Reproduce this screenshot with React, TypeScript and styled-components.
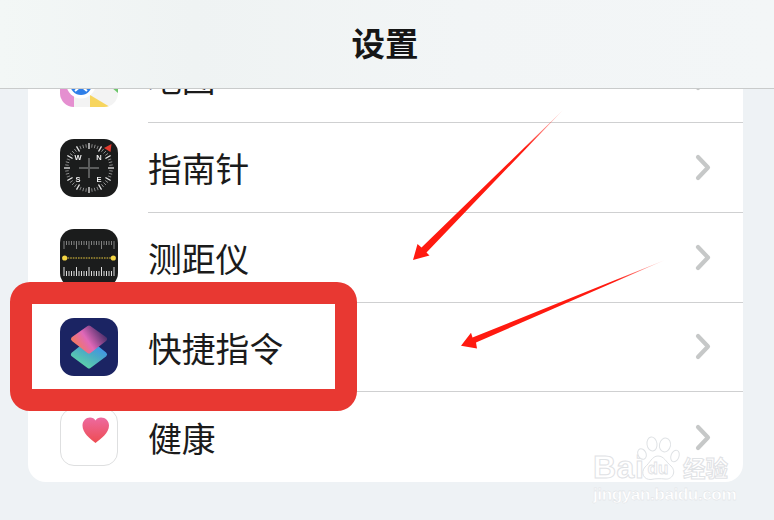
import styled, { createGlobalStyle } from "styled-components";

const GlobalStyle = createGlobalStyle`
    html, body {
        margin: 0;
        padding: 0;
        background: #eef2f5;
    }
`;

const Screen = styled.div`
    position: relative;
    width: 774px;
    height: 520px;
    overflow: hidden;
    background: #eef2f5;
    font-family: "Liberation Sans", "Noto Sans CJK SC", sans-serif;
`;

const NavBar = styled.header`
    position: relative;
    z-index: 2;
    height: 88px;
    display: flex;
    align-items: center;
    justify-content: center;
    background: linear-gradient(90deg, #f3f7f6 0%, #eff3f3 25%, #f2f5f6 60%, #f3f6f7 100%);
    border-bottom: 1px solid #c9cbcb;
`;

const Title = styled.h1`
    margin: 0;
    padding: 0 4px 4px 0;
    font-family: "Noto Sans CJK SC", sans-serif;
    font-size: 33.5px;
    font-weight: 700;
    line-height: 1;
    color: #161616;
`;

const Card = styled.section`
    margin: -55.5px 31px 0 28px;
    background: #fff;
    border-radius: 0 0 18px 18px;
`;

const Row = styled.div`
    height: 89.7px;
    display: flex;
    align-items: center;
    padding-left: 32px;
`;

const IconBox = styled.div<{ $outlined?: boolean }>`
    flex: none;
    width: 58px;
    height: 58px;
    border-radius: 14px;
    overflow: hidden;
    box-sizing: border-box;
    border: ${p => (p.$outlined ? "1px solid #dedfe0" : "none")};
    background: #fff;

    svg {
        display: block;
        filter: blur(0.35px);
    }
`;

const RowBody = styled.div<{ $last?: boolean }>`
    flex: 1;
    height: 100%;
    box-sizing: border-box;
    margin-left: 30px;
    padding-right: 32px;
    display: flex;
    align-items: center;
    justify-content: space-between;
    border-bottom: ${p => (p.$last ? "none" : "1px solid #cfd0d1")};
`;

const Label = styled.span`
    font-family: "Noto Sans CJK SC", sans-serif;
    font-size: 33.8px;
    line-height: 1;
    color: #1b1b1b;
    padding-top: 1px;
`;

const Highlight = styled.div`
    position: absolute;
    z-index: 3;
    left: 10px;
    top: 282px;
    width: 347px;
    height: 129px;
    box-sizing: border-box;
    border: 22px solid #e83832;
    border-radius: 20px;
`;

const Arrows = styled.svg`
    position: absolute;
    z-index: 3;
    left: 0;
    top: 0;
`;

const Watermark = styled.div`
    position: absolute;
    z-index: 4;
    left: 593px;
    top: 436px;
    width: 140px;
    display: flex;
    flex-direction: column;
    color: #fff;
    -webkit-text-stroke: 1px #dfe2e5;
`;

const MarkTop = styled.div`
    display: flex;
    align-items: flex-end;
    height: 45px;
`;

const MarkBai = styled.span`
    font-size: 32px;
    font-weight: 700;
    line-height: 28px;
    width: 45px;
    letter-spacing: 0.5px;
`;

const MarkPaw = styled.svg`
    flex: none;
    margin: 0 1px 0 -1px;
`;

const MarkCn = styled.span`
    font-family: "Noto Sans CJK SC", sans-serif;
    font-size: 22.5px;
    font-weight: 700;
    line-height: 28px;
`;

const MarkUrl = styled.span`
    font-size: 17.2px;
    font-weight: 700;
    line-height: 20px;
    margin-top: 3px;
    letter-spacing: -0.45px;
    white-space: nowrap;
    -webkit-text-stroke: 0.3px #d9dcdf;
`;

const Chevron = () => (
    <svg width="18" height="27" viewBox="0 0 18 27" fill="none">
        <path d="M5 3 L15 13.5 L5 24" stroke="#c6c8c8" strokeWidth="4.2" strokeLinecap="round" strokeLinejoin="round" />
    </svg>
);

const MapsIcon = () => (
    <svg width="58" height="58" viewBox="0 0 58 58">
        <rect width="58" height="58" fill="#f3f3f3" />
        <path d="M0 20 H14 V58 H0 Z" fill="#e58fd0" />
        <path d="M30 46 L50 58 H30 Z" fill="#f7d55e" />
        <path d="M51 38 H58 V44 Z" fill="#6dc66b" />
        <circle cx="21" cy="35" r="14.5" fill="#fff" />
        <circle cx="21" cy="35" r="11" fill="#2f7fe8" />
        <path d="M15 42 L21 37 L27 42" stroke="#fff" strokeWidth="2" fill="none" />
    </svg>
);

const compassTicks = Array.from({ length: 48 }, (_, i) => (i * 360) / 48);

const CompassIcon = () => (
    <svg width="58" height="58" viewBox="0 0 58 58">
        <rect width="58" height="58" fill="#1b1c1c" />
        {compassTicks.map((deg, i) => (
            <line
                key={deg}
                x1="29"
                y1={i % 4 === 0 ? 4 : 5}
                x2="29"
                y2={i % 4 === 0 ? 10 : 8.5}
                stroke={i % 4 === 0 ? "#e8e8e8" : "#8f8f8f"}
                strokeWidth={i % 4 === 0 ? 1.3 : 0.9}
                transform={`rotate(${deg} 29 29)`}
            />
        ))}
        <path d="M44 9 L51.5 5 L50.5 13 Z" fill="#e23a2e" />
        <path d="M29 19 V39 M19 29 H39" stroke="#5b5c5c" strokeWidth="2" />
        <g fill="#eee" fontFamily="Liberation Sans" fontSize="7.5" fontWeight="700" textAnchor="middle">
            <text x="18" y="21">W</text>
            <text x="39" y="21">N</text>
            <text x="18" y="43">S</text>
            <text x="39" y="43">E</text>
        </g>
    </svg>
);

const rulerTicks = Array.from({ length: 21 }, (_, i) => 4 + i * 2.5);

const RulerIcon = () => (
    <svg width="58" height="58" viewBox="0 0 58 58">
        <rect width="58" height="58" fill="#1b1c1c" />
        {rulerTicks.map((x, i) => (
            <line key={x} x1={x} y1="12" x2={x} y2={i % 5 === 0 ? 20 : 16} stroke="#8d8d8d" strokeWidth="0.9" />
        ))}
        {rulerTicks.map((x, i) => (
            <line key={x} x1={x} y1={i % 5 === 0 ? 38 : 42} x2={x} y2="47" stroke="#dcdcdc" strokeWidth="1" />
        ))}
        <line x1="5" y1="29" x2="53" y2="29" stroke="#e9c93e" strokeWidth="1.1" strokeDasharray="1.6 1" />
        <circle cx="4.7" cy="29" r="2.6" fill="#f4d544" />
        <circle cx="53.3" cy="29" r="2.6" fill="#f4d544" />
    </svg>
);

const ShortcutsIcon = () => (
    <svg width="58" height="58" viewBox="0 0 58 58">
        <defs>
            <linearGradient id="scBottom" x1="0.15" y1="1" x2="0.85" y2="0">
                <stop offset="0" stopColor="#5fd6a4" />
                <stop offset="0.55" stopColor="#4aa8c8" />
                <stop offset="1" stopColor="#3a8cf5" />
            </linearGradient>
            <linearGradient id="scTop" x1="0" y1="0.75" x2="1" y2="0.25">
                <stop offset="0" stopColor="#f47a58" />
                <stop offset="0.45" stopColor="#e068b8" />
                <stop offset="1" stopColor="#4a2e6a" />
            </linearGradient>
        </defs>
        <rect width="58" height="58" fill="#1b2463" />
        <path d="M29 24 L44.5 36.5 L29 48 L13.5 36.5 Z" fill="url(#scBottom)" stroke="url(#scBottom)" strokeWidth="5" strokeLinejoin="round" />
        <path d="M29 10 L44.5 21 L29 33 L13.5 21 Z" fill="url(#scTop)" stroke="url(#scTop)" strokeWidth="5" strokeLinejoin="round" />
    </svg>
);

const HealthIcon = () => (
    <svg width="56" height="56" viewBox="0 0 56 56">
        <defs>
            <linearGradient id="heart" x1="0" y1="0" x2="0" y2="1">
                <stop offset="0" stopColor="#ed6aa0" />
                <stop offset="1" stopColor="#ee4c52" />
            </linearGradient>
        </defs>
        <path
            d="M34.5 34 C29 29.5 21.5 24 21.5 16.5 C21.5 12 25 8.5 29 8.5 C31.5 8.5 33.5 9.8 34.5 11.5 C35.5 9.8 37.5 8.5 40 8.5 C44.5 8.5 48 12 48 16.5 C48 24 40 29.5 34.5 34 Z"
            fill="url(#heart)"
        />
    </svg>
);

const rows = [
    { label: "地图", icon: <MapsIcon /> },
    { label: "指南针", icon: <CompassIcon /> },
    { label: "测距仪", icon: <RulerIcon /> },
    { label: "快捷指令", icon: <ShortcutsIcon /> },
    { label: "健康", icon: <HealthIcon />, outlined: true },
];

export default function App() {
    return (
        <Screen>
            <GlobalStyle />
            <NavBar>
                <Title>设置</Title>
            </NavBar>
            <Card>
                {rows.map((row, i) => (
                    <Row key={row.label}>
                        <IconBox $outlined={row.outlined}>{row.icon}</IconBox>
                        <RowBody $last={i === rows.length - 1}>
                            <Label>{row.label}</Label>
                            <Chevron />
                        </RowBody>
                    </Row>
                ))}
            </Card>
            <Highlight />
            <Arrows width="774" height="520" viewBox="0 0 774 520">
                <defs>
                    <linearGradient id="arrowA" gradientUnits="userSpaceOnUse" x1="563" y1="110" x2="525" y2="148">
                        <stop offset="0" stopColor="#ff1a10" stopOpacity="0.15" />
                        <stop offset="1" stopColor="#ff1a10" />
                    </linearGradient>
                    <linearGradient id="arrowB" gradientUnits="userSpaceOnUse" x1="665" y1="260" x2="615" y2="280">
                        <stop offset="0" stopColor="#ff1a10" stopOpacity="0.15" />
                        <stop offset="1" stopColor="#ff1a10" />
                    </linearGradient>
                </defs>
                <polygon points="563,110 426.5,252.5 429.5,255.5 413,260 417.5,244 421.5,247.5" fill="url(#arrowA)" />
                <polygon points="665,260 472.5,337.5 471,332.7 461,345.7 477,348.5 476,342.5" fill="url(#arrowB)" />
            </Arrows>
            <Watermark>
                <MarkTop>
                    <MarkBai>Bai</MarkBai>
                    <MarkPaw width="45" height="45" viewBox="0 0 45 45" fill="#fff" stroke="#dfe2e5" strokeWidth="1">
                        <ellipse cx="5" cy="18" rx="4" ry="5.5" transform="rotate(-25 5 18)" />
                        <ellipse cx="15" cy="8" rx="5" ry="7" transform="rotate(-8 15 8)" />
                        <ellipse cx="28" cy="9" rx="5.5" ry="7" transform="rotate(12 28 9)" />
                        <ellipse cx="38" cy="20" rx="4" ry="6" transform="rotate(20 38 20)" />
                        <path d="M21 20 C27 20 29 26 34 30 C40 36 35 44 28 43 C24 42.5 18 42.5 14 43.5 C7 44 3 37 8 31 C13 27 15 20 21 20 Z" />
                        <text
                            x="21"
                            y="38"
                            textAnchor="middle"
                            fontFamily="Liberation Sans"
                            fontSize="17"
                            fontWeight="700"
                            strokeWidth="0.8"
                        >
                            du
                        </text>
                    </MarkPaw>
                    <MarkCn>经验</MarkCn>
                </MarkTop>
                <MarkUrl>jingyan.baidu.com</MarkUrl>
            </Watermark>
        </Screen>
    );
}
